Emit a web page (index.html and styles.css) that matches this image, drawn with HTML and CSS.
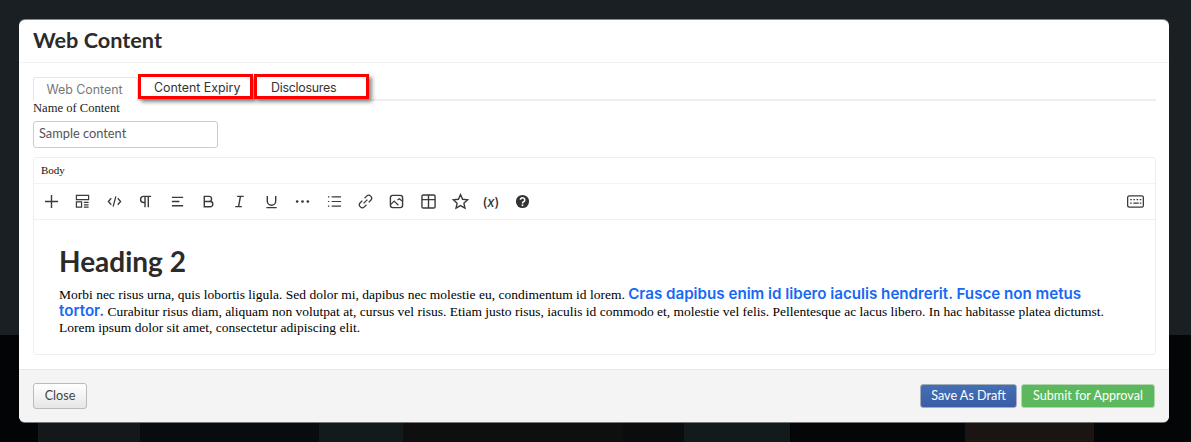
FILE: index.html
```html
<!DOCTYPE html>
<html lang="en">
<head>
<meta charset="utf-8">
<title>Web Content</title>
<link rel="stylesheet" href="styles.css">
</head>
<body>
<div class="modal">
  <header class="modal-header"><h1>Web Content</h1></header>
  <main class="modal-body">
    <nav class="tabs">
      <span class="tab tab-active">Web Content</span>
      <span class="tab tab-marked tab-first">Content Expiry</span>
      <span class="tab tab-marked tab-second">Disclosures</span>
    </nav>
    <label class="field-label" for="name">Name of Content</label>
    <input class="text-input" id="name" type="text" value="Sample content">
    <section class="editor">
      <div class="editor-label">Body</div>
      <div class="toolbar">
        <svg class="icon" viewBox="0 0 16 16"><path d="M8 1v14M1 8h14" stroke-width="1.500"/></svg>
        <svg class="icon" viewBox="0 0 16 16"><path d="M1.500 1.500h13v4.500h-13zM1.500 8.500h5.500v5.500h-5.500zM9.500 9h5M9.500 11.500h5M9.500 14h5" stroke-width="1.300"/></svg>
        <svg class="icon" viewBox="0 0 16 16"><path d="M4.500 4.500L1.500 8l3 3.500M11.500 4.500l3 3.500-3 3.500M9.500 2.500L6.500 13.500" stroke-width="1.400"/></svg>
        <svg class="icon" viewBox="0 0 16 16"><path d="M7.500 14V2.500M11 14V2.500M14 2.500H6a3.200 3.200 0 0 0 0 6.500h1.500" stroke-width="1.500"/></svg>
        <svg class="icon" viewBox="0 0 16 16"><path d="M2 3.500h12M2 8h8M2 12.500h12" stroke-width="1.400"/></svg>
        <svg class="icon" viewBox="0 0 16 16"><path d="M3.500 2.500h5.500a2.800 2.800 0 0 1 0 5.500H3.500zM3.500 8h6.300a2.800 2.800 0 0 1 0 5.600H3.500z" stroke-width="1.500"/></svg>
        <svg class="icon" viewBox="0 0 16 16"><path d="M5.500 2.500h7M3.500 13.500h7M9 2.500L7 13.500" stroke-width="1.500"/></svg>
        <svg class="icon" viewBox="0 0 16 16"><path d="M3.500 2v5.500a4.500 4.500 0 0 0 9 0V2M2.500 14.500h11" stroke-width="1.500"/></svg>
        <svg class="icon" viewBox="0 0 16 16"><circle class="solid" cx="2.300" cy="8" r="1.400"/><circle class="solid" cx="8" cy="8" r="1.400"/><circle class="solid" cx="13.700" cy="8" r="1.400"/></svg>
        <svg class="icon" viewBox="0 0 16 16"><path d="M5 3h10M5 8h10M5 13h10M1 3h1.500M1 8h1.500M1 13h1.500" stroke-width="1.300"/></svg>
        <svg class="icon" viewBox="0 0 16 16"><path d="M7 4.500l2.200-2.200a3 3 0 0 1 4.400 4.300l-2.200 2.300M9 11.500l-2.200 2.200a3 3 0 0 1-4.400-4.300l2.200-2.300M10 6l-4 4" stroke-width="1.400"/></svg>
        <svg class="icon" viewBox="0 0 16 16"><rect x="1.500" y="1.500" width="13" height="13" rx="2.500" stroke-width="1.500"/><path d="M2 11l3.500-3.500 4.500 4.500M9 6.500l2-1.500 3 2.500" stroke-width="1.300"/></svg>
        <svg class="icon" viewBox="0 0 16 16"><rect x="1" y="1" width="14" height="14" rx="1.500" stroke-width="1.500"/><path d="M1 6h14M8 1v14" stroke-width="1.500"/></svg>
        <svg class="icon icon-star" viewBox="0 0 16 16"><path d="M8 1.500l2 4.400 4.800.5-3.600 3.200 1 4.700L8 11.900l-4.200 2.400 1-4.700L1.200 6.400 6 5.900z" stroke-width="1.300"/></svg>
        <span class="var-icon">(<i>x</i>)</span>
        <svg class="icon" viewBox="0 0 16 16"><circle class="solid" cx="8" cy="8" r="7"/><path class="inverse" d="M5.800 6.200a2.300 2.200 0 1 1 3.400 2c-.8.500-1.200.9-1.200 1.800" stroke-width="1.700"/><circle class="hole" cx="8" cy="12" r="1"/></svg>
        <svg class="icon icon-keyboard" viewBox="0 0 16 12"><rect x=".6" y=".8" width="14.800" height="10.400" rx="1.500" stroke-width="1.200"/><path d="M3 4.200h1.500M6 4.200h1.500M9 4.200h1.500M12 4.200h1.500M3 7.500h1.500M6 7.500h5M12 7.500h1.500" stroke-width="1.300"/></svg>
      </div>
      <div class="editor-content">
        <h2>Heading 2</h2>
        <p>Morbi nec risus urna, quis lobortis ligula. Sed dolor mi, dapibus nec molestie eu, condimentum id lorem. <strong>Cras dapibus enim id libero iaculis hendrerit. Fusce non metus tortor.</strong> Curabitur risus diam, aliquam non volutpat at, cursus vel risus. Etiam justo risus, iaculis id commodo et, molestie vel felis. Pellentesque ac lacus libero. In hac habitasse platea dictumst. Lorem ipsum dolor sit amet, consectetur adipiscing elit.</p>
      </div>
    </section>
  </main>
  <footer class="modal-footer">
    <button class="btn btn-default" type="button">Close</button>
    <div class="actions">
      <button class="btn btn-primary" type="button">Save As Draft</button>
      <button class="btn btn-success" type="button">Submit for Approval</button>
    </div>
  </footer>
</div>
</body>
</html>
```
FILE: styles.css
```css
* { box-sizing: border-box; }
html, body { height: 100%; }
body {
  margin: 0;
  height: 442px;
  overflow: hidden;
  padding: 20px 22px 20px 19px;
  background-color: #191f22;
  background-image: linear-gradient(90deg,
    #020405 0, #020405 38px,
    #15181a 38px, #15181a 140px,
    #090c0e 140px, #090c0e 319px,
    #131a1c 319px, #131a1c 403px,
    #100f0f 403px, #100f0f 623px,
    #0b0c0d 623px, #0b0c0d 684px,
    #131a1c 684px, #131a1c 790px,
    #040608 790px, #040608 965px,
    #1a1412 965px, #1a1412 1094px,
    #030506 1094px, #030506 100%);
  background-size: 100% 107px;
  background-position: bottom;
  background-repeat: no-repeat;
  font-family: "Lato", sans-serif;
  color: #333;
}
.modal {
  width: 1150px;
  height: 402px;
  background: #fff;
  border-radius: 6px;
  box-shadow: 0 -1px 0 #888, 0 1px 0 #777;
  display: flex;
  flex-direction: column;
  overflow: hidden;
}
.modal-header {
  height: 43px;
  padding: 6px 14px 0;
  border-bottom: 1px solid #f2f2f2;
}
.modal-header h1 {
  margin: 0;
  font-size: 21.700px;
  line-height: 28px;
  font-weight: 700;
  color: #2b2b2b;
}
.modal-body {
  flex: 1;
  padding: 14px 13px 0 14px;
}
.tabs {
  display: flex;
  height: 24px;
  border-bottom: 2px solid #eee;
  font-family: "Inter", sans-serif;
  font-size: 12.400px;
}
.tab {
  display: flex;
  align-items: center;
  height: 24px;
  background: #fff;
}
.tab-active {
  width: 105px;
  justify-content: center;
  padding-right: 2px;
  color: #777;
  border: 1px solid #e6e6e6;
  border-bottom: 0;
  border-radius: 3px 3px 0 0;
}
.tab-marked {
  position: relative;
  top: -3px;
  height: 25px;
  padding-top: 1px;
  border: 3px solid #f00;
  box-shadow: 3px 3px 4px rgba(0, 0, 0, .45);
  color: #333;
}
.tab-first { width: 115px; padding-left: 13px; }
.tab-second { width: 115px; margin-left: 1px; padding-left: 14px; letter-spacing: -.25px; }
.field-label {
  display: block;
  font-family: "Liberation Serif", serif;
  font-size: 12.600px;
  line-height: 14px;
  color: #222;
}
.text-input {
  display: block;
  width: 185px;
  height: 27px;
  margin-top: 6px;
  padding: 0 5px 3px;
  border: 1px solid #ccc;
  border-radius: 3px;
  font: 12.800px "Lato", sans-serif;
  color: #555;
}
.editor {
  margin-top: 9px;
  height: 198px;
  border: 1px solid #eee;
  border-radius: 3px;
}
.editor-label {
  height: 26px;
  padding: 5px 7px 0;
  font-family: "Liberation Serif", serif;
  font-size: 11px;
  line-height: 14px;
  color: #111;
  border-bottom: 1px solid #f3f3f3;
}
.toolbar {
  height: 36px;
  display: flex;
  align-items: center;
  gap: 16.400px;
  padding: 0 10px;
  border-bottom: 1px solid #f0f0f0;
}
.icon {
  flex: none;
  width: 15px;
  height: 15px;
  fill: none;
  stroke: #3a3a3a;
}
.icon .solid { fill: #333; stroke: none; }
.icon .inverse { stroke: #fff; }
.icon .hole { fill: #fff; stroke: none; }
.icon-star { width: 17px; height: 17px; margin-right: -3px; }
.icon-keyboard { margin-left: auto; width: 17px; height: 13px; margin-right: 1px; }
.var-icon {
  flex: none;
  width: 16px;
  font: 500 13px "Inter", sans-serif;
  color: #333;
  white-space: nowrap;
}
.editor-content {
  padding: 26px 36px 0 25px;
}
.editor-content h2 {
  margin: 0;
  font-size: 28px;
  line-height: 30px;
  font-weight: 700;
  color: #2b2b2b;
}
.editor-content p {
  margin: 11px 0 0;
  font-family: "Liberation Serif", serif;
  font-size: 13.500px;
  line-height: 16.500px;
  color: #000;
}
.editor-content strong {
  font-family: "Inter", sans-serif;
  font-size: 15.150px;
  line-height: 14px;
  font-weight: 600;
  color: #1668f5;
}
.modal-footer {
  height: 53px;
  display: flex;
  align-items: center;
  justify-content: space-between;
  padding: 0 14px 0 14px;
  background: #f4f4f4;
  border-top: 1px solid #e8e8e8;
}
.actions { display: flex; gap: 4px; }
.btn {
  height: 24px;
  padding: 0 0 2px;
  border: 1px solid transparent;
  border-radius: 3px;
  font: 12.600px "Lato", sans-serif;
  color: #fff;
}
.btn-default {
  height: 26px;
  width: 54px;
  color: #444;
  border-color: #bbb;
  background: linear-gradient(#fff, #e6e6e6);
}
.btn-primary {
  width: 97px;
  background: linear-gradient(#4370b5, #3a5ca6);
  border-color: #a5adba;
}
.btn-success {
  width: 134px;
  background: #5cb85c;
  border-color: #b5d6b5;
}
```
